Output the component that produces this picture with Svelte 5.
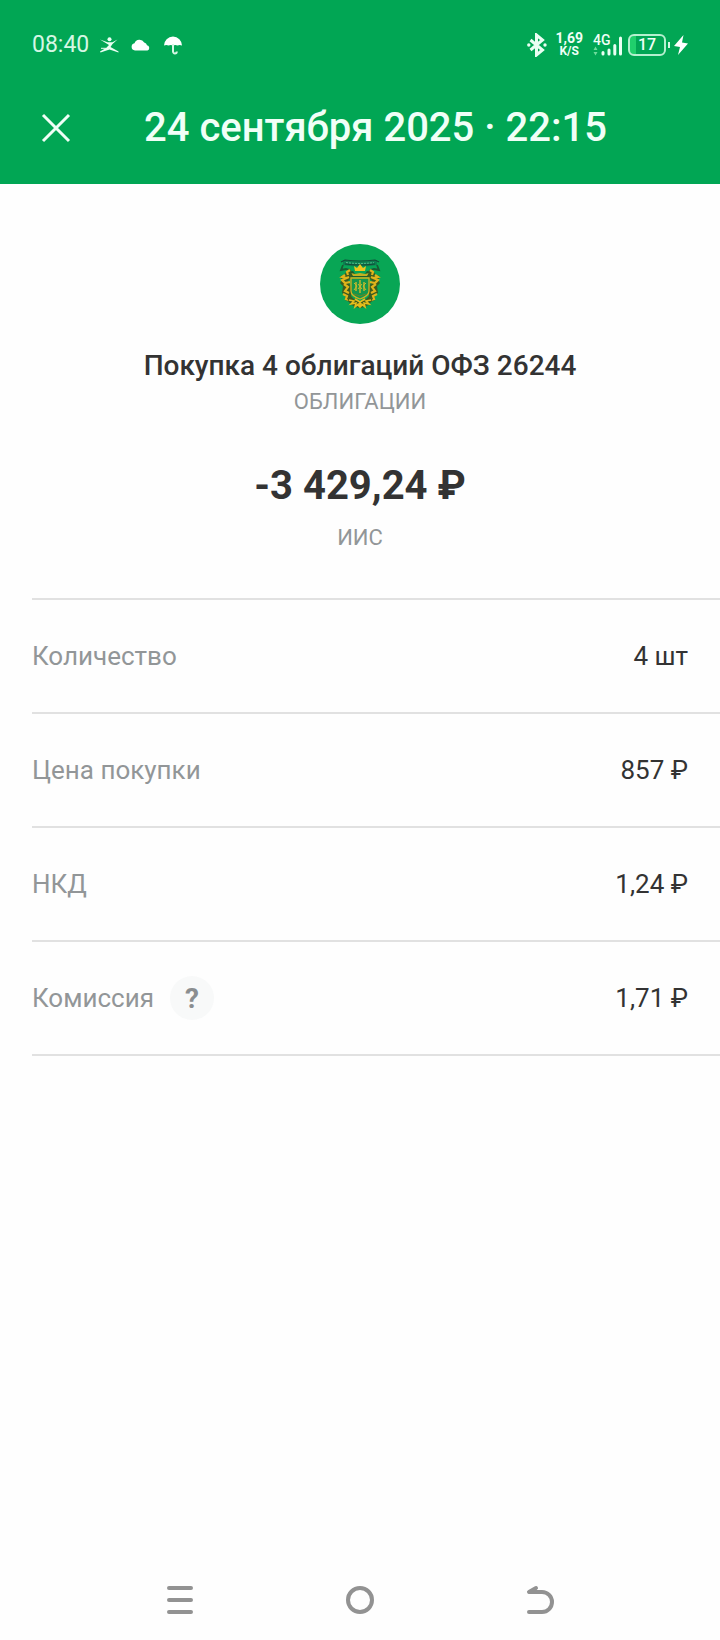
<script lang="ts">
	interface Detail {
		label: string;
		value: string;
		hint?: boolean;
	}

	const details: Detail[] = [
		{ label: 'Количество', value: '4 шт' },
		{ label: 'Цена покупки', value: '857 ₽' },
		{ label: 'НКД', value: '1,24 ₽' },
		{ label: 'Комиссия', value: '1,71 ₽', hint: true }
	];
</script>

<div class="screen">
	<header class="header">
		<div class="status-bar">
			<div class="status-left">
				<span class="clock">08:40</span>
				<svg viewBox="0 0 20 16" width="20" height="16" aria-hidden="true">
					<circle cx="10.500" cy="2.200" r="2" fill="#eafff3" />
					<path d="M1 2.500l7.500 2.800h5L18.500 2.500 13.500 7l-2 3 8 4.500v1L10.500 12.500 1.500 15.500l-.5-1L7 11l3-3z" fill="#eafff3" />
					<path d="M2 11.300h5" stroke="#eafff3" stroke-width="1" />
				</svg>
				<svg viewBox="0 0 20 12" width="20" height="12" aria-hidden="true">
					<path d="M4 11.500a3.700 3.700 0 0 1-.5-7.300A5.300 5.300 0 0 1 13.200 3.500a3.600 3.600 0 0 1 2.800 2.800 2.700 2.700 0 0 1 .5 5.200z" fill="#fff" />
				</svg>
				<svg viewBox="0 0 20 20" width="20" height="20" aria-hidden="true">
					<path d="M1 10.500a9 9 0 0 1 18 0l-2.300-.6-2.200.6-2.200-.6-2.300.6-2.300-.6-2.200.6-2.300-.6z" fill="#fff" />
					<path d="M10 9v7.500a1.900 1.900 0 0 0 3.800 0" fill="none" stroke="#d5f7e4" stroke-width="2" />
				</svg>
			</div>
			<div class="status-right">
				<svg viewBox="0 0 20 24" width="20" height="24" aria-hidden="true">
					<path d="M3.500 7l12 10-6 5V2l6 5-12 10" fill="none" stroke="#eafff3" stroke-width="3" />
					<circle cx="1.800" cy="12" r="1.700" fill="#eafff3" />
					<circle cx="18" cy="12" r="1.700" fill="#eafff3" />
				</svg>
				<div class="speed">
					<span>1,69</span>
					<small>K/S</small>
				</div>
				<div class="network">
					<span>4G</span>
					<svg viewBox="0 0 29 24" width="29" height="24" aria-hidden="true">
						<path d="M.5 17l2-3.500 2 3.500zM.5 19l2 3.500 2-3.500z" fill="#6fdc9c" />
						<path d="M10 21v-1.500M16 21v-4M21.800 21v-8.500M27.500 21V5" stroke="#eafff3" stroke-width="3" stroke-linecap="round" />
					</svg>
				</div>
				<div class="battery">
					<span class="battery-body">17</span>
					<span class="battery-tip"></span>
				</div>
				<svg viewBox="0 0 14 20" width="14" height="20" aria-hidden="true">
					<path d="M9.500 0L0 11l6 1L4 20 14 8.500l-6-1z" fill="#fff" />
				</svg>
			</div>
		</div>
		<div class="title-bar">
			<button aria-label="Закрыть">
				<svg viewBox="0 0 32 32" width="32" height="32" aria-hidden="true">
					<path d="M3 3l26 26M29 3L3 29" stroke="#f0fff7" stroke-width="3" />
				</svg>
			</button>
			<h1>24 сентября 2025 · 22:15</h1>
		</div>
	</header>

	<main>
		<section class="summary">
			<svg viewBox="0 0 80 80" width="80" height="80" aria-hidden="true">
				<circle cx="40" cy="40" r="40" fill="#08a655" />
				<!-- canopy ribbon -->
				<path d="M23 16q17 3 34 0v5q-17 3-34 0z" fill="#0c8050" />
				<path d="M21 18l4-2q15 2 30 0l4 2M25 20q15 2 30 0" fill="none" stroke="#16493a" stroke-width="1.200" />
				<path d="M26 18.500q14 2 28 0" fill="none" stroke="#56b98a" stroke-width="1" stroke-dasharray="2 1" />
				<path d="M23 21l-2 5 5-1 4 1M57 21l2 5-5-1-4 1" fill="none" stroke="#195a34" stroke-width="1.800" />
				<!-- crown -->
				<path d="M35 27l-1-5 3 2 3-4 3 4 3-2-1 5z" fill="#f0c51c" />
				<path d="M28 28l5-1 2 3h10l2-3 5 1-3 5H31z" fill="#1f5e2a" />
				<path d="M31 29l4 1 5-1 5 1 4-1-2 3H33z" fill="#c2af22" />
				<!-- supporters -->
				<g id="supporter">
					<path d="M31 26l-4 1-3 4-4 1 2 4-2 3 3 3-1 7 4 2-1 5 7 3 2-4-3-3v-9l-3-6 4-4z" fill="#3d5c1f" />
					<path d="M30 26l-3 2 1 3M25 31l-3 2 5 1M29 33l-7 3 3 3 5-1M24 40l4 3-3 4 4 2M23 50l4 2-1 3 6 2" fill="none" stroke="#e0b41b" stroke-width="2.200" />
				</g>
				<use href="#supporter" transform="matrix(-1 0 0 1 80 0)" />
				<!-- shield -->
				<path d="M31 34h18v13q0 5-9 8-9-3-9-8z" fill="#15974b" stroke="#d4b021" stroke-width="1.300" />
				<path d="M36 38v9M40 36v13M44 38v9" fill="none" stroke="#d6bd2a" stroke-width="1.300" />
				<path d="M34 39l3 3-3 4M46 39l-3 3 3 4M38 40l4 5M42 40l-4 5" fill="none" stroke="#c5b92d" stroke-width="1" />
				<path d="M34 50l6 2 6-2" fill="none" stroke="#6a8424" stroke-width="1" />
				<!-- wreath -->
				<path d="M27 54q3 9 13 10 10-1 13-10l-7 1-6 3-6-3z" fill="#3d5c1f" />
				<path d="M29 56l5 1-3 3 5-1-1 4 5-4 5 4-1-4 5 1-3-3 5-1M35 55l5 3 5-3M40 57v6M37 60l3 3 3-3" fill="none" stroke="#e6bd1c" stroke-width="1.600" />
			</svg>
			<h2>Покупка 4 облигаций ОФЗ 26244</h2>
			<p class="caption">ОБЛИГАЦИИ</p>
			<p class="amount">-3 429,24 ₽</p>
			<p class="caption">ИИС</p>
		</section>

		<dl class="details">
			{#each details as item (item.label)}
				<div class="row">
					<dt>
						{item.label}
						{#if item.hint}
							<button class="hint-btn" aria-label="О комиссии">?</button>
						{/if}
					</dt>
					<dd>{item.value}</dd>
				</div>
			{/each}
		</dl>
	</main>

	<nav class="nav-bar">
		<button aria-label="Меню">
			<svg viewBox="0 0 32 32" width="32" height="32" aria-hidden="true">
				<path d="M5 4h22M5 16h22M5 28h22" />
			</svg>
		</button>
		<button aria-label="Домой">
			<svg viewBox="0 0 32 32" width="32" height="32" aria-hidden="true">
				<circle cx="16" cy="16" r="12" />
			</svg>
		</button>
		<button aria-label="Назад">
			<svg viewBox="0 0 32 32" width="32" height="32" aria-hidden="true">
				<path d="M12 4L5 8h13a10 10 0 0 1 0 20H5" />
			</svg>
		</button>
	</nav>
</div>

<style>
	:global(body) {
		margin: 0;
		background: #fefefe;
	}

	.screen {
		min-height: 100vh;
		display: flex;
		flex-direction: column;
		font-family: Roboto, 'Noto Sans', sans-serif;
		color: #333;
	}

	button {
		background: none;
		border: none;
		padding: 0;
		display: flex;
		align-items: center;
		justify-content: center;
		font-family: inherit;
		cursor: pointer;
	}

	svg {
		display: block;
		flex-shrink: 0;
	}

	h1,
	h2,
	p,
	dl,
	dd {
		margin: 0;
	}

	.header {
		background: #01a654;
		color: #f0fff7;
	}

	.status-bar {
		display: flex;
		align-items: center;
		justify-content: space-between;
		height: 70px;
		padding: 10px 32px 0;
	}

	.status-left {
		display: flex;
		align-items: center;
		gap: 12px;
	}

	.clock {
		margin-right: -2px;
		font-size: 23px;
		line-height: 32px;
		color: #d5f7e4;
	}

	.status-right {
		display: flex;
		align-items: center;
		gap: 4px;
	}

	.speed {
		display: flex;
		flex-direction: column;
		align-items: center;
		margin: 0 6px 0 4px;
		font-size: 14px;
		font-weight: 700;
		line-height: 13px;
	}

	.speed small {
		font-size: 12px;
	}

	.network {
		display: grid;
		align-items: start;
		justify-items: start;
		margin-right: 2px;
	}

	.network > * {
		grid-area: 1 / 1;
	}

	.network span {
		font-size: 14px;
		font-weight: 500;
		line-height: 14px;
	}

	.battery {
		display: flex;
		align-items: center;
		gap: 2px;
	}

	.battery-body {
		box-sizing: border-box;
		width: 38px;
		height: 22px;
		border: 2px solid #b5f0cf;
		border-radius: 6px;
		background: linear-gradient(to right, #20cf6c 6px, transparent 6px);
		font-size: 16px;
		font-weight: 500;
		line-height: 18px;
		text-align: center;
	}

	.battery-tip {
		width: 2px;
		height: 6px;
		background: #d5f7e4;
	}

	.title-bar {
		display: grid;
		grid-template-columns: 32px 1fr;
		gap: 72px;
		align-items: center;
		height: 64px;
		padding: 16px 40px 24px;
	}

	h1 {
		font-size: 40px;
		font-weight: 500;
		line-height: 48px;
	}

	.summary {
		display: flex;
		flex-direction: column;
		align-items: center;
		padding: 60px 32px 44px;
		text-align: center;
	}

	h2 {
		margin: 24px 0 2px;
		font-size: 28px;
		font-weight: 500;
		line-height: 36px;
	}

	.caption {
		font-size: 22px;
		line-height: 32px;
		color: #929698;
	}

	.amount {
		margin: 44px 0 12px;
		font-size: 40px;
		font-weight: 700;
		line-height: 48px;
	}

	.details {
		margin-left: 32px;
		border-top: 2px solid #e1e1e1;
		font-size: 26px;
		line-height: 32px;
	}

	.row {
		display: flex;
		align-items: center;
		justify-content: space-between;
		height: 112px;
		padding-right: 32px;
		border-bottom: 2px solid #e1e1e1;
	}

	dt {
		display: flex;
		align-items: center;
		gap: 16px;
		color: #929698;
	}

	.hint-btn {
		width: 44px;
		height: 44px;
		border-radius: 50%;
		background: #f8f9f9;
		color: #8b8e90;
		font-size: 28px;
		font-weight: 700;
	}

	.nav-bar {
		display: grid;
		grid-template-columns: repeat(3, 1fr);
		margin-top: auto;
		padding: 0 12.5%;
		height: 80px;
	}

	.nav-bar svg {
		fill: none;
		stroke: #929292;
		stroke-width: 4;
		stroke-linecap: round;
		stroke-linejoin: round;
	}
</style>
